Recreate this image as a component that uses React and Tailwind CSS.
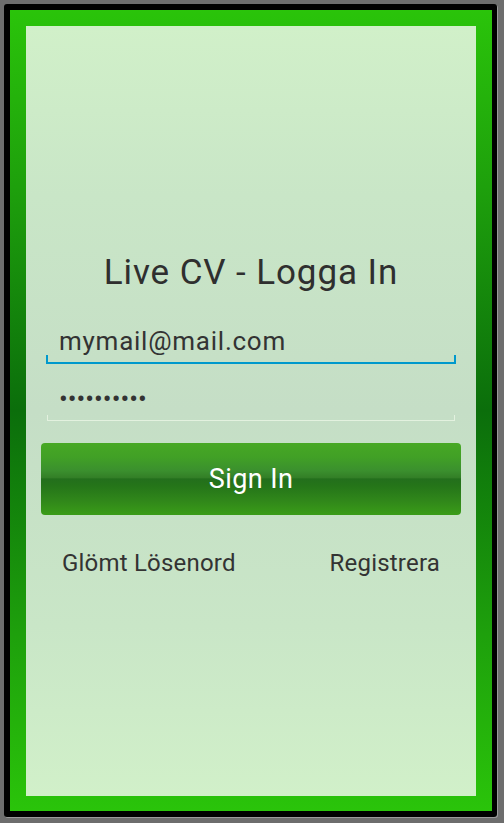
import React from 'react';

export default function App() {
  return (
    <div className="w-[504px] h-[823px] bg-[#6d6d6d] pt-1 pl-1 pr-[7px] pb-[6px] font-['Roboto',sans-serif]">
      {/* black device edge */}
      <div className="h-full bg-black rounded-[3px] pt-[6px] pl-[6px] pr-[5px] pb-[6px] shadow-[1px_1px_0_#9a9a9a]">
        {/* green frame */}
        <div className="h-full px-4 pt-4 pb-[15px] bg-[linear-gradient(to_bottom,#2ac40a_0%,#1ea00c_22%,#0b6e0b_50%,#1ea00c_78%,#2ac40a_100%)]">
          {/* panel */}
          <div className="h-full flex flex-col pt-[227px] bg-[linear-gradient(to_bottom,#d1f0c9_0%,#c9e6c7_22%,#c5dec6_50%,#c9e6c7_78%,#d1f0c9_100%)]">
            <h1 className="text-center text-[35px] leading-[40px] tracking-[0.9px] text-[#2f2f2f] font-normal">Live CV - Logga In</h1>

            {/* email */}
            <div className="relative mx-5 mt-[32px] h-[39px] border-b-2 border-[#0099cc]">
              <span className="absolute left-0 bottom-0 w-[2px] h-[7px] bg-[#0099cc]"></span>
              <span className="absolute right-0 bottom-0 w-[2px] h-[7px] bg-[#0099cc]"></span>
              <div className="pl-[13px] text-[26px] leading-[32px] tracking-[0.75px] text-[#333]">mymail@mail.com</div>
            </div>

            {/* password */}
            <div className="relative mx-[21px] mt-[19px] h-[38px] border-b border-[#e3f1df]">
              <span className="absolute left-0 bottom-0 w-px h-[5px] bg-[#e3f1df]"></span>
              <span className="absolute right-0 bottom-0 w-px h-[5px] bg-[#e3f1df]"></span>
              <div className="pl-[12px] pt-[2px] text-[26px] leading-[28px] text-[#333]">••••••••••</div>
            </div>

            {/* sign in */}
            <button className="mx-[15px] mt-[22px] h-[72px] rounded-[4px] text-white text-[27px] tracking-[0.4px] bg-[linear-gradient(to_bottom,#47a824_0%,#41a026_20%,#3b902e_38%,#337f27_48%,#236f1c_50%,#257519_60%,#30871a_80%,#3a9c18_100%)]">
              Sign In
            </button>

            {/* links */}
            <div className="flex justify-between px-[36px] mt-[33px] text-[24px] leading-[30px] tracking-[0.2px] text-[#333]">
              <span>Glömt Lösenord</span>
              <span>Registrera</span>
            </div>
          </div>
        </div>
      </div>
    </div>
  );
}
